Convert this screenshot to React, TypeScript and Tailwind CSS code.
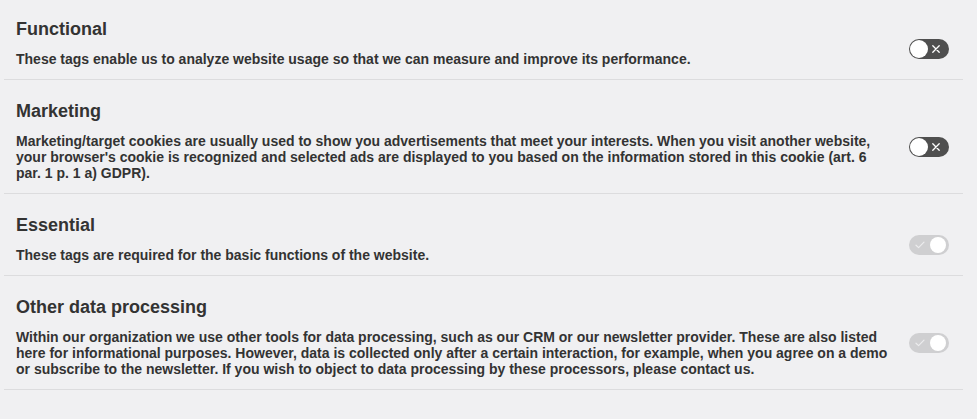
import { useState } from 'react'

interface Category {
  id: string
  title: string
  text: string
  checked: boolean
  locked: boolean
}

const categories: Category[] = [
  {
    id: 'functional',
    title: 'Functional',
    text: 'These tags enable us to analyze website usage so that we can measure and improve its performance.',
    checked: false,
    locked: false,
  },
  {
    id: 'marketing',
    title: 'Marketing',
    text: "Marketing/target cookies are usually used to show you advertisements that meet your interests. When you visit another website, your browser's cookie is recognized and selected ads are displayed to you based on the information stored in this cookie (art. 6 par. 1 p. 1 a) GDPR).",
    checked: false,
    locked: false,
  },
  {
    id: 'essential',
    title: 'Essential',
    text: 'These tags are required for the basic functions of the website.',
    checked: true,
    locked: true,
  },
  {
    id: 'other',
    title: 'Other data processing',
    text: 'Within our organization we use other tools for data processing, such as our CRM or our newsletter provider. These are also listed here for informational purposes. However, data is collected only after a certain interaction, for example, when you agree on a demo or subscribe to the newsletter. If you wish to object to data processing by these processors, please contact us.',
    checked: true,
    locked: true,
  },
]

function Toggle({ checked, locked, onChange }: { checked: boolean; locked: boolean; onChange: () => void }) {
  if (checked) {
    return (
      <button
        type="button"
        disabled={locked}
        onClick={onChange}
        className="relative -mt-5 h-5 w-10 shrink-0 rounded-full bg-[#cfcfd1]"
      >
        <svg viewBox="0 0 10 8" className="absolute left-[6px] top-[6px] h-2 w-[10px]" fill="none">
          <path d="M1 4.2 L3.6 6.6 L9 1.2" stroke="#ececee" strokeWidth="1.2" strokeLinecap="round" strokeLinejoin="round" />
        </svg>
        <span className="absolute right-[3px] top-[2px] h-4 w-4 rounded-full bg-white" />
      </button>
    )
  }
  return (
    <button
      type="button"
      onClick={onChange}
      className="relative -mt-5 h-5 w-10 shrink-0 rounded-full bg-[#4f4f4f]"
    >
      <span className="absolute left-[1px] top-[1px] h-[18px] w-[18px] rounded-full bg-white" />
      <svg viewBox="0 0 8 8" className="absolute left-[23px] top-[6px] h-2 w-2" fill="none">
        <path d="M0.8 0.8 L7.2 7.2 M7.2 0.8 L0.8 7.2" stroke="#ffffff" strokeWidth="1.3" strokeLinecap="round" />
      </svg>
    </button>
  )
}

export default function App() {
  const [state, setState] = useState<Record<string, boolean>>(
    Object.fromEntries(categories.map((c) => [c.id, c.checked])),
  )

  return (
    <div className="min-h-[419px] w-full bg-[#f0f0f2] font-['Liberation_Sans',Arial,sans-serif] text-[#333333]">
      <div className="ml-1 mr-[14px]">
        {categories.map((cat, i) => (
          <section
            key={cat.id}
            className={`border-b border-[#dcdcde] pb-3 pl-3 pr-[14px] ${i === 0 ? 'pt-[18px]' : 'pt-5'}`}
          >
            <h3 className="mb-[11px] text-[18px] font-bold leading-[22px]">{cat.title}</h3>
            <div className="flex items-center gap-4">
              <p className="flex-1 text-[14px] font-bold leading-4">{cat.text}</p>
              <Toggle
                checked={state[cat.id]}
                locked={cat.locked}
                onChange={() => setState((s) => ({ ...s, [cat.id]: !s[cat.id] }))}
              />
            </div>
          </section>
        ))}
      </div>
    </div>
  )
}
